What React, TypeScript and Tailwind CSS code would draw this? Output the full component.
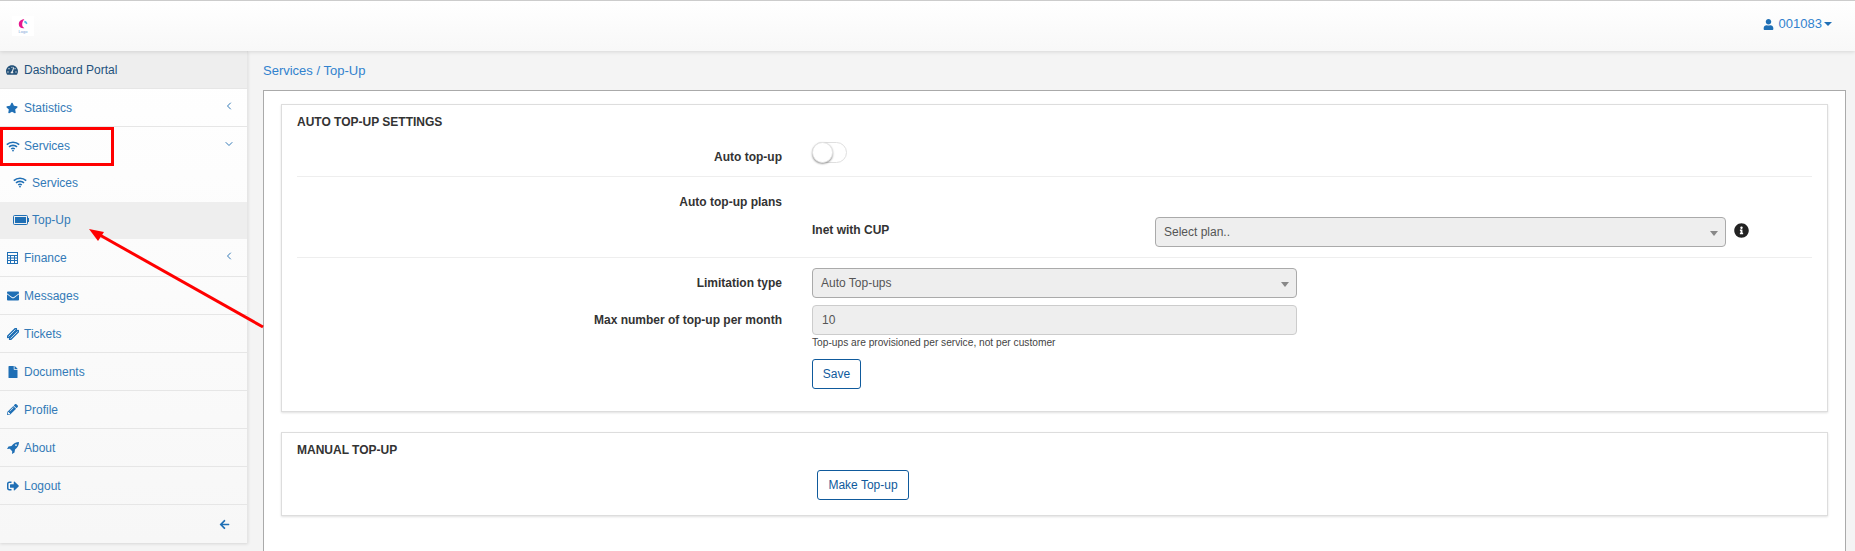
import type { ReactNode } from "react";
import { FaArrowLeft, FaEnvelope, FaFile, FaInfoCircle, FaPencilAlt, FaSignOutAlt, FaStar, FaTachometerAlt, FaUser } from "react-icons/fa";
import { LuChevronDown, LuChevronLeft } from "react-icons/lu";

function BatteryIcon() {
    return (
        <svg viewBox="0 0 16 10" className="h-[10px] w-[16px]" fill="none">
            <rect x="0.5" y="0.5" width="14" height="9" rx="1" stroke="#1f6fb5" />
            <rect x="2" y="2" width="11" height="6" fill="#1f6fb5" />
            <rect x="15" y="3" width="1" height="4" fill="#1f6fb5" />
        </svg>
    );
}

function WifiIcon() {
    return (
        <svg viewBox="0 0 14 11" className="h-[11px] w-[14px]" fill="none" stroke="#1f6fb5" strokeWidth="1.6">
            <path d="M0.8 3.6C4.2 0.4 9.8 0.4 13.2 3.6" />
            <path d="M3 5.9C5.2 3.9 8.8 3.9 11 5.9" />
            <path d="M5.2 8C6.2 7.2 7.8 7.2 8.8 8" />
            <circle cx="7" cy="9.6" r="0.9" fill="#1f6fb5" stroke="none" />
        </svg>
    );
}

function CalculatorIcon() {
    return (
        <svg viewBox="0 0 11 12" className="h-[12px] w-[11px]" fill="#1f6fb5">
            <path fillRule="evenodd" d="M0 0h11v12H0zM1 1v2h9V1zM1 4v1.5h2V4zM4 4v1.5h3V4zM8 4v1.5h2V4zM1 6.5V8h2V6.5zM4 6.5V8h3V6.5zM8 6.5V8h2V6.5zM1 9v2h2V9zM4 9v2h3V9zM8 9v2h2V9z" />
        </svg>
    );
}

function TicketIcon() {
    return (
        <svg viewBox="0 0 12 12" className="h-[12px] w-[12px]">
            <g transform="rotate(-45 6 6)">
                <path d="M-1 3h14v2a1 1 0 0 0 0 2v2H-1V7a1 1 0 0 0 0-2z" fill="#1f6fb5" />
                <path d="M1 4.6h10M1 7.4h10" stroke="#dbe8f3" strokeWidth="0.8" />
            </g>
        </svg>
    );
}

function RocketIcon() {
    return (
        <svg viewBox="0 0 12 12" className="h-[12px] w-[12px]" fill="#1f6fb5">
            <path fillRule="evenodd" d="M12 0C9 0 6.5 1.5 4.5 4L1.5 4.5 0 7l2.8-.2 2.4 2.4L5 12l2.5-1.5L8 7.5C10.5 5.5 12 3 12 0zM9 2.2a.9.9 0 1 1 0 1.8.9.9 0 0 1 0-1.8z" />
        </svg>
    );
}

function Logo() {
    return (
        <div className="flex h-[20px] w-[22px] flex-col items-center bg-white pt-[3px]">
            <svg viewBox="0 0 10 10" className="h-[10px] w-[10px]">
                <path d="M6.4 0.3C2.6 0.3 0.8 2.8 0.8 5.2 0.8 7.8 3 9.6 6.4 9.2 4.8 8.2 4 6.8 4.2 5 4.4 3 5.2 1.6 6.4 0.3z" fill="#e6178d" />
                <path d="M6.5 1.8C8.2 2 9.4 3.2 9.4 4.8L8 5.2C7.8 4.2 7.2 3.6 6.1 3.4z" fill="#58b5e8" />
            </svg>
            <span className="text-[4px] leading-[5px] text-[#7aa7d8]">Logo</span>
        </div>
    );
}

function NavItem({ icon, label, active, sub, chevron, border = true }: { icon: ReactNode; label: string; active?: boolean; sub?: boolean; chevron?: "left" | "down"; border?: boolean }) {
    return (
        <div className={`flex shrink-0 items-center pr-[12px] ${sub ? "h-[37px] pb-[2px] pl-[13px]" : "h-[38px] pl-[6px]"} ${border ? "border-b border-[#e6e6e6]" : ""} ${active ? "bg-[#eeeeee]" : ""}`}>
            <span className={`flex shrink-0 items-center text-[#1f6fb5] ${sub ? "w-[19px]" : "w-[18px]"}`}>{icon}</span>
            <span className="text-[12px] text-[#337ab7]">{label}</span>
            {chevron === "left" && <LuChevronLeft className="ml-auto mb-[4px] text-[12px] text-[#337ab7]" />}
            {chevron === "down" && <LuChevronDown className="ml-auto mb-[4px] text-[12px] text-[#337ab7]" />}
        </div>
    );
}

function FieldLabel({ children }: { children: ReactNode }) {
    return <div className="w-[485px] shrink-0 text-right text-[12px] font-bold text-[#333333]">{children}</div>;
}

function SelectBox({ text, className }: { text: string; className: string }) {
    return (
        <div className={`flex h-[30px] items-center rounded-[4px] border border-[#aaaaaa] bg-[#eeeeee] pl-[8px] pr-[7px] text-[12px] text-[#555555] ${className}`}>
            {text}
            <span className="ml-auto mt-[2px] h-0 w-0 border-x-[4px] border-t-[5px] border-x-transparent border-t-[#888888]" />
        </div>
    );
}

function OutlineButton({ children, className = "" }: { children: ReactNode; className?: string }) {
    return (
        <button type="button" className={`h-[30px] rounded-[3px] border border-[#0f5a9c] bg-white text-[12px] text-[#0f5a9c] ${className}`}>
            {children}
        </button>
    );
}

export default function App() {
    return (
        <div className="relative flex h-[551px] w-[1855px] flex-col overflow-hidden bg-[#f4f4f4] font-['Liberation_Sans',Arial,sans-serif]">
            <header className="z-10 flex h-[51px] shrink-0 items-center border-t border-[#cccccc] bg-gradient-to-b from-white to-[#f8f8f8] pl-[12px] pr-[23px] shadow-[0_1px_4px_rgba(0,0,0,0.12)]">
                <Logo />
                <div className="ml-auto flex items-center pb-[4px] text-[13px] text-[#3182ce]">
                    <FaUser className="mr-[5px] text-[11px] text-[#1f6fb5]" />
                    001083
                    <span className="ml-[2px] h-0 w-0 border-x-[4px] border-t-[4px] border-x-transparent border-t-[#1f6fb5]" />
                </div>
            </header>

            <div className="flex min-h-0 flex-1">
                <aside className="h-[492px] w-[248px] shrink-0 border-r border-[#e6e6e6] bg-gradient-to-b from-white to-[#f7f7f7] shadow-[0_1px_3px_rgba(0,0,0,0.12)]">
                    <div className="flex h-[38px] items-center border-b border-[#e6e6e6] bg-[#eeeeee] pl-[6px]">
                        <span className="flex w-[18px] text-[#24527a]"><FaTachometerAlt className="text-[12px]" /></span>
                        <span className="text-[12px] text-[#23527c]">Dashboard Portal</span>
                    </div>
                    <NavItem icon={<FaStar className="text-[12px]" />} label="Statistics" chevron="left" />
                    <NavItem icon={<WifiIcon />} label="Services" chevron="down" border={false} />
                    <NavItem icon={<WifiIcon />} label="Services" sub border={false} />
                    <NavItem icon={<BatteryIcon />} label="Top-Up" sub active border={false} />
                    <NavItem icon={<span className="ml-px"><CalculatorIcon /></span>} label="Finance" chevron="left" />
                    <NavItem icon={<FaEnvelope className="ml-px text-[12px]" />} label="Messages" />
                    <NavItem icon={<span className="ml-px"><TicketIcon /></span>} label="Tickets" />
                    <NavItem icon={<FaFile className="ml-px text-[12px]" />} label="Documents" />
                    <NavItem icon={<FaPencilAlt className="ml-px text-[11px]" />} label="Profile" />
                    <NavItem icon={<span className="ml-px"><RocketIcon /></span>} label="About" />
                    <NavItem icon={<FaSignOutAlt className="ml-px text-[12px]" />} label="Logout" />
                    <div className="flex h-[38px] items-center justify-end pr-[17px] text-[#1f6fb5]">
                        <FaArrowLeft className="text-[11px]" />
                    </div>
                </aside>

                <main className="min-w-0 flex-1 pl-[15px] pr-[9px]">
                    <div className="flex h-[39px] items-center pt-[1px] text-[13px] text-[#3182ce]">Services / Top-Up</div>
                    <div className="h-[480px] border border-[#aaaaaa] bg-white px-[17px] pt-[13px]">
                        <section className="h-[308px] border border-[#dddddd] px-[15px] shadow-[0_1px_2px_rgba(0,0,0,0.12)]">
                            <h2 className="pt-[10px] text-[12px] leading-[15px] font-bold text-[#333333]">AUTO TOP-UP SETTINGS</h2>
                            <div className="mt-[11px] flex h-[36px] items-start gap-[30px] border-b border-[#eeeeee]">
                                <FieldLabel><div className="mt-[7px]">Auto top-up</div></FieldLabel>
                                <div className="relative mt-[1px] h-[21px] w-[35px] rounded-full border border-[#dfdfdf] bg-white">
                                    <div className="absolute -left-px -top-px h-[21px] w-[21px] rounded-full border border-[#e5e5e5] bg-white shadow-[0_1px_2px_rgba(0,0,0,0.4)]" />
                                </div>
                            </div>
                            <div className="h-[81px] border-b border-[#eeeeee]">
                                <div className="flex pt-[16px]">
                                    <FieldLabel>Auto top-up plans</FieldLabel>
                                </div>
                                <div className="mt-[6px] flex items-center pl-[515px]">
                                    <div className="mb-[5px] w-[343px] text-[12px] font-bold text-[#333333]">Inet with CUP</div>
                                    <SelectBox text="Select plan.." className="w-[571px]" />
                                    <FaInfoCircle className="mb-[3px] ml-[8px] text-[15px] text-[#222222]" />
                                </div>
                            </div>
                            <div className="mt-[10px] flex items-center gap-[30px]">
                                <FieldLabel>Limitation type</FieldLabel>
                                <SelectBox text="Auto Top-ups" className="w-[485px]" />
                            </div>
                            <div className="mt-[7px] flex items-center gap-[30px]">
                                <FieldLabel>Max number of top-up per month</FieldLabel>
                                <div className="flex h-[30px] w-[485px] items-center rounded-[4px] border border-[#cccccc] bg-[#eeeeee] pl-[9px] text-[12px] text-[#555555]">10</div>
                            </div>
                            <div className="mt-[1px] pl-[515px] text-[10.2px] leading-[14px] text-[#444444]">Top-ups are provisioned per service, not per customer</div>
                            <div className="mt-[9px] pl-[515px]">
                                <OutlineButton className="w-[49px]">Save</OutlineButton>
                            </div>
                        </section>
                        <section className="mt-[20px] h-[84px] border border-[#dddddd] px-[15px] shadow-[0_1px_2px_rgba(0,0,0,0.12)]">
                            <h2 className="pt-[10px] text-[12px] leading-[15px] font-bold text-[#333333]">MANUAL TOP-UP</h2>
                            <div className="mt-[12px] pl-[520px]">
                                <OutlineButton className="w-[92px]">Make Top-up</OutlineButton>
                            </div>
                        </section>
                    </div>
                </main>
            </div>

            {/* red annotations drawn over the screenshot */}
            <div className="absolute left-0 top-[127px] h-[39px] w-[114px] border-[3px] border-[#ff0000]" />
            <svg className="absolute left-0 top-0" width="300" height="340" viewBox="0 0 300 340" fill="none">
                <line x1="263" y1="327" x2="98" y2="234" stroke="#ff0000" strokeWidth="3" />
                <polygon points="89,229 104,232 98,241" fill="#ff0000" />
            </svg>
        </div>
    );
}
